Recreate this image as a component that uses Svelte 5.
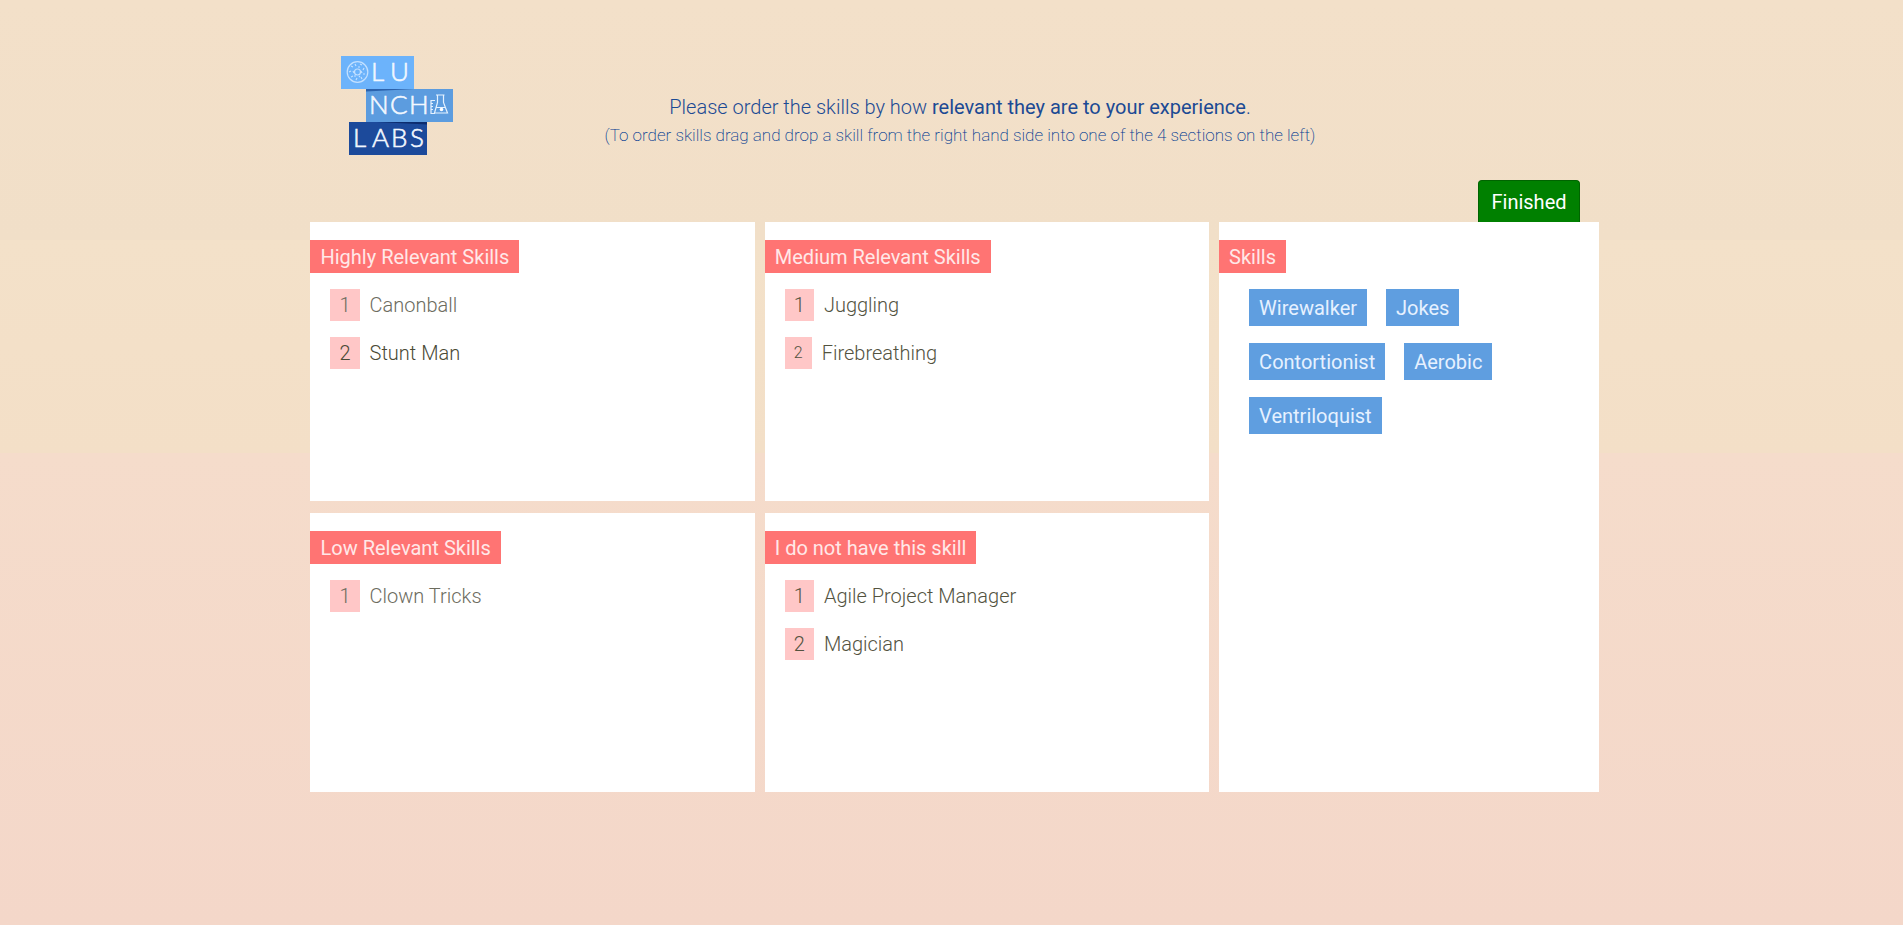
<script>
    const sections = [
        {
            title: 'Highly Relevant Skills',
            skills: [
                { name: 'Canonball', state: 'fading' },
                { name: 'Stunt Man', state: 'settled' }
            ]
        },
        {
            title: 'Medium Relevant Skills',
            skills: [
                { name: 'Juggling', state: '' },
                { name: 'Firebreathing', state: 'small' }
            ]
        },
        {
            title: 'Low Relevant Skills',
            skills: [{ name: 'Clown Tricks', state: 'fading' }]
        },
        {
            title: 'I do not have this skill',
            skills: [
                { name: 'Agile Project Manager', state: '' },
                { name: 'Magician', state: '' }
            ]
        }
    ];

    const remainingSkills = ['Wirewalker', 'Jokes', 'Contortionist', 'Aerobic', 'Ventriloquist'];
</script>

<div class="page">
    <main>
        <header>
            <svg class="logo" viewBox="0 0 112 100" role="img" aria-label="Lunch Labs">
                <rect x="0" y="0" width="73" height="33" fill="#6cb3fb" />
                <rect x="25" y="33" width="87" height="33" fill="#5c9cdf" />
                <path d="M25 33H73L25 35.500Z" fill="#2b62ad" />
                <rect x="8" y="66" width="78" height="33" fill="#1c4a9b" />
                <path d="M36 66H86V68.500Z" fill="#0c2c6e" />
                <g fill="none" stroke="#c3e0ff" stroke-width="1.200">
                    <circle cx="16.500" cy="16" r="10.300" />
                    <circle cx="16.500" cy="16" r="3" />
                    <path d="M10 10l2 1M14 8l1 2M19 8l2 1M23 12l-1 2M24 18l-2 0M21 23l-1-2M15 24l1-2M10 21l2-1M8 16l2-1M12 15l1 2M17 11l2 0M20 15l1 2M13 20l2 0M18 21l1-1" />
                </g>
                <g fill="none" stroke="#e4f1ff" stroke-width="1.200">
                    <path d="M94 44.500h-4v13h4M90 47.500h2M90 50.500h2M90 53.500h2" />
                    <path d="M95 39h8.500M96.500 39.500v7l-3 10.500h13l-4-10.500v-7M95 51.500h9" />
                </g>
                <circle cx="100.500" cy="53.500" r="1.800" fill="#fff" />
                <g class="logo-text">
                    <text x="30" y="25">L</text>
                    <text x="49" y="25">U</text>
                    <text x="28" y="58">N</text>
                    <text x="49" y="58">C</text>
                    <text x="68" y="58">H</text>
                    <text x="12" y="91">L</text>
                    <text x="31" y="91">A</text>
                    <text x="50" y="91">B</text>
                    <text x="69" y="91">S</text>
                </g>
            </svg>
            <div class="intro">
                <p class="lead">Please order the skills by how <strong>relevant they are to your experience</strong>.</p>
                <p class="hint">(To order skills drag and drop a skill from the right hand side into one of the 4 sections on the left)</p>
            </div>
        </header>

        <div class="actions">
            <button type="button" class="finished">Finished</button>
        </div>

        <div class="board">
            {#each sections as section (section.title)}
                <section class="panel">
                    <h2>{section.title}</h2>
                    <ol>
                        {#each section.skills as skill, i (skill.name)}
                            <li class={skill.state} draggable="true">
                                <span class="rank">{i + 1}</span>
                                <span>{skill.name}</span>
                            </li>
                        {/each}
                    </ol>
                </section>
            {/each}
            <section class="panel pool">
                <h2>Skills</h2>
                <ul>
                    {#each remainingSkills as skill (skill)}
                        <li draggable="true">{skill}</li>
                    {/each}
                </ul>
            </section>
        </div>
    </main>
</div>

<style>
    :global(body) {
        margin: 0;
        background: #f4d7c9;
    }
    .page {
        box-sizing: border-box;
        min-height: 100vh;
        font-family: Roboto, "Liberation Sans", sans-serif;
        font-weight: 300;
        font-size: 20px;
        line-height: 24px;
        background: linear-gradient(to bottom,
            #f3e0c9 0, #f1dfc8 240px,
            #f3e1c9 240px, #f3dfc7 453px,
            #f5dccb 453px, #f4d7c9 100%);
    }
    main {
        box-sizing: border-box;
        margin: 0 16%;
        padding: 56px 0 40px 6px;
    }
    header {
        display: grid;
        grid-template-columns: 112px 1fr 112px;
        padding: 0 20px 0 31px;
    }
    .logo {
        display: block;
        width: 112px;
        height: 100px;
    }
    .logo-text {
        fill: #f3f8ff;
        stroke: #f3f8ff;
        stroke-width: 0.6px;
        font-family: Lato, sans-serif;
        font-size: 26px;
        font-weight: 300;
    }
    .intro {
        padding-top: 37px;
        text-align: center;
        color: #1c4a94;
    }
    p {
        margin: 0;
    }
    .lead {
        font-size: 20px;
        line-height: 28px;
    }
    .lead strong {
        font-weight: 400;
    }
    .hint {
        color: #003a91;
        font-size: 17px;
        font-weight: 200;
        line-height: 28px;
    }
    .actions {
        display: flex;
        justify-content: flex-end;
        margin-top: 24px;
        padding-right: 19px;
    }
    .finished {
        height: 42px;
        padding: 0 12px;
        border: 1px solid #006400;
        border-bottom: 0;
        border-radius: 4px 4px 0 0;
        background: #008000;
        color: #fff;
        font: inherit;
        font-weight: 400;
        cursor: pointer;
    }
    .board {
        display: grid;
        grid-template-columns: 445fr 445fr 380fr;
        grid-auto-rows: minmax(279px, auto);
        gap: 12px 10px;
    }
    .panel {
        background: #fff;
        padding-top: 18px;
    }
    .pool {
        grid-column: 3;
        grid-row: 1 / span 2;
    }
    h2 {
        width: fit-content;
        margin: 0;
        padding: 5px 10px 3px;
        background: #ff7473;
        color: #ffe8e8;
        font-size: 20px;
        line-height: 25px;
        font-weight: 400;
    }
    ol,
    ul {
        list-style: none;
        margin: 0;
    }
    ol {
        display: flex;
        flex-direction: column;
        gap: 16px;
        padding: 16px 20px;
    }
    ol li {
        display: flex;
        align-items: center;
        gap: 10px;
        color: #53533f;
    }
    .rank {
        padding: 4px 9px;
        background: #ffc7c7;
        text-align: center;
    }
    .fading {
        color: #6c6c5e;
    }
    .settled {
        color: #4a4a36;
    }
    .small .rank {
        font-size: 16px;
    }
    ul {
        display: flex;
        flex-wrap: wrap;
        gap: 17px 19px;
        padding: 16px 30px;
    }
    ul li {
        padding: 7px 10px 5px;
        background: #5f9ee0;
        color: #e6f1ff;
        line-height: 25px;
        font-weight: 400;
    }
</style>
